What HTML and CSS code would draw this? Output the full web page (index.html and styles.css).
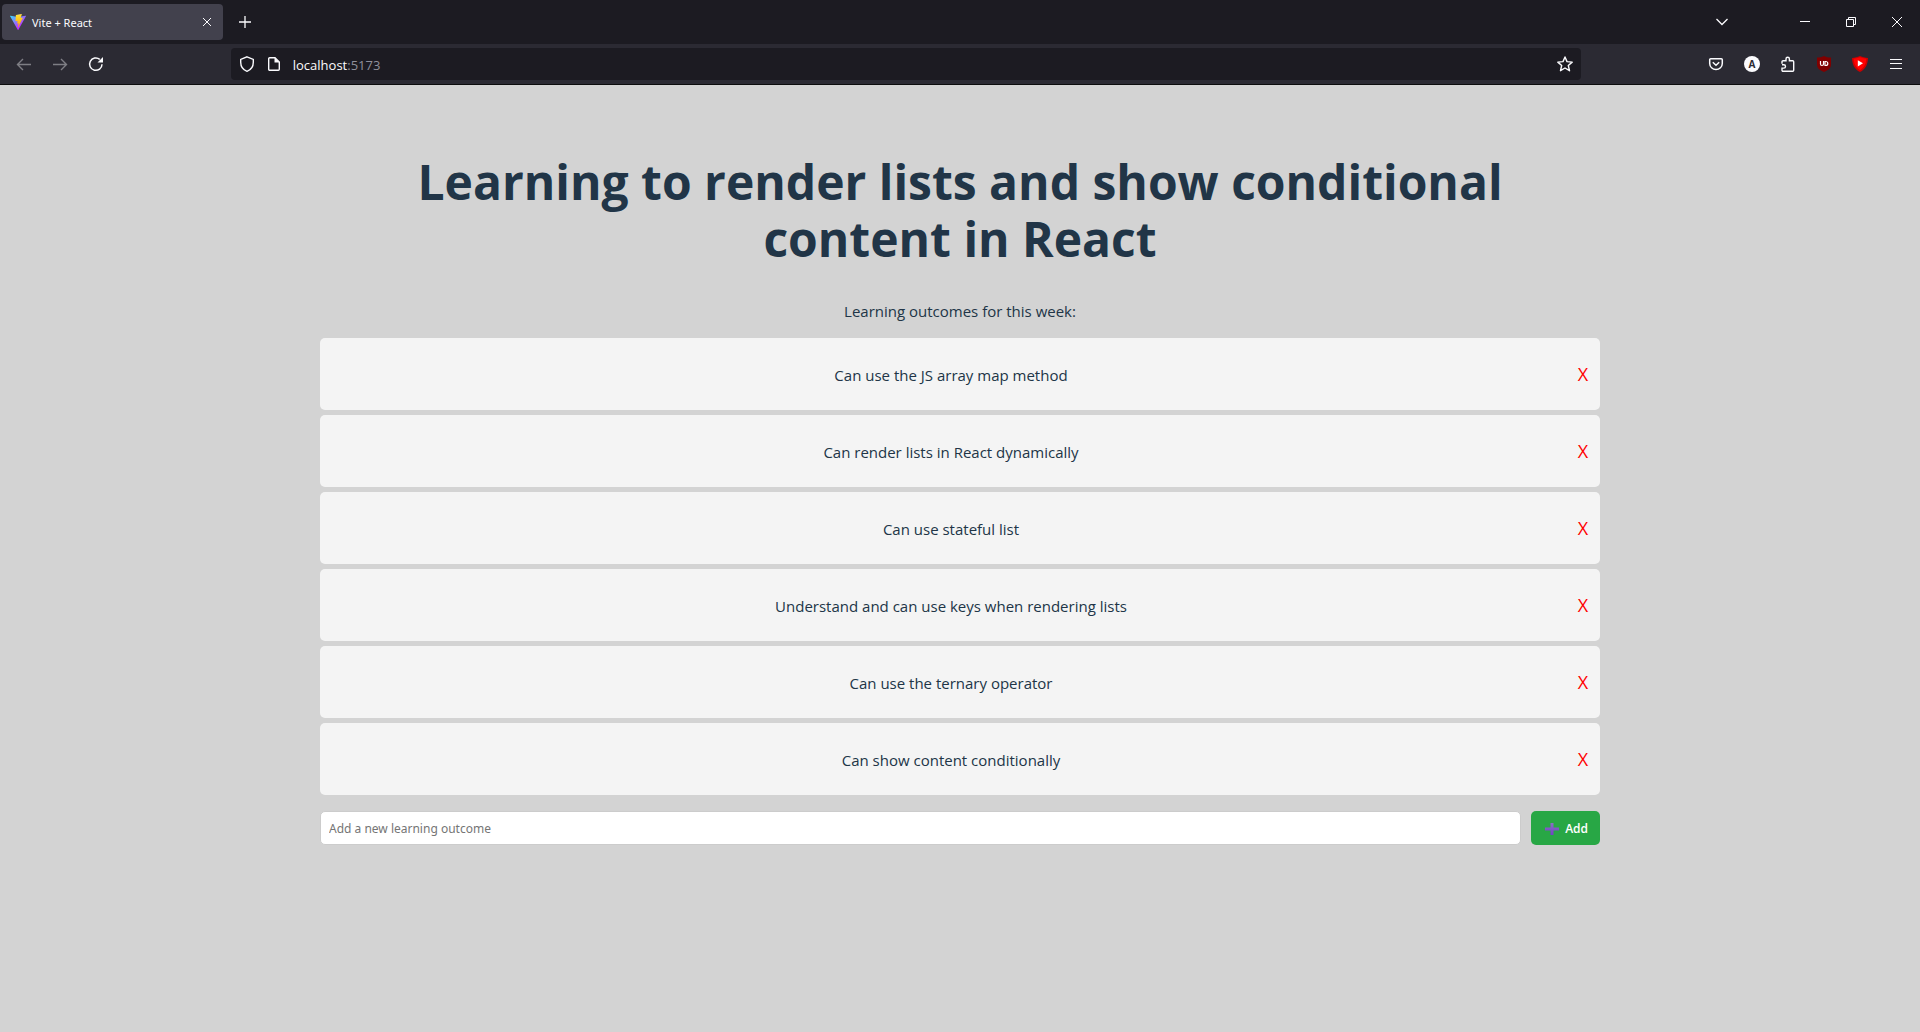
FILE: index.html
```html
<!DOCTYPE html>
<html lang="en">
<head>
<meta charset="utf-8">
<meta name="viewport" content="width=device-width, initial-scale=1">
<title>Vite + React</title>
<link rel="stylesheet" href="styles.css">
</head>
<body>
<header class="browser">
  <div class="tabs">
    <div class="tab">
      <svg width="16" height="16" viewBox="0 0 256 257" aria-hidden="true">
        <defs>
          <linearGradient id="vite-v" x1="-1%" x2="58%" y1="8%" y2="79%"><stop offset="0%" stop-color="#41D1FF"/><stop offset="100%" stop-color="#BD34FE"/></linearGradient>
          <linearGradient id="vite-bolt" x1="43%" x2="50%" y1="2%" y2="89%"><stop offset="0%" stop-color="#FFEA83"/><stop offset="8%" stop-color="#FFDD35"/><stop offset="100%" stop-color="#FFA800"/></linearGradient>
        </defs>
        <path fill="url(#vite-v)" d="M255.153 37.938 134.897 252.976c-2.483 4.44-8.862 4.466-11.382.048L.875 37.958c-2.746-4.814 1.371-10.646 6.827-9.67l120.385 21.517a6.537 6.537 0 0 0 2.322-.004l117.867-21.483c5.438-.991 9.574 4.796 6.877 9.62Z"/>
        <path fill="url(#vite-bolt)" d="M185.432.063 96.44 17.501a3.268 3.268 0 0 0-2.634 3.014l-5.474 92.456a3.268 3.268 0 0 0 3.997 3.378l24.777-5.718c2.318-.535 4.413 1.507 3.936 3.838l-7.361 36.047c-.495 2.426 1.782 4.5 4.151 3.78l15.304-4.649c2.372-.72 4.652 1.36 4.15 3.788l-11.698 56.621c-.732 3.542 3.979 5.473 5.943 2.437l1.313-2.028 72.516-144.72c1.215-2.423-.88-5.186-3.54-4.672l-25.505 4.922c-2.396.462-4.435-1.77-3.759-4.114l16.646-57.705c.677-2.35-1.37-4.583-3.769-4.113Z"/>
      </svg>
      <span class="tab-title">Vite + React</span>
      <button class="tab-close" aria-label="Close tab"><svg width="8" height="8" viewBox="0 0 8 8"><path d="M0 0l8 8M8 0 0 8"/></svg></button>
    </div>
    <button class="tool" aria-label="New tab"><svg width="12" height="12" viewBox="0 0 12 12"><path d="M6 0v12M0 6h12" stroke-width="1.3"/></svg></button>
    <button class="tool tab-list" aria-label="List all tabs"><svg width="12" height="8" viewBox="0 0 12 8"><path d="M.5 1 6 6.500 11.500 1" stroke-width="1.3"/></svg></button>
    <div class="window">
      <button class="control" aria-label="Minimize"><svg width="10" height="10" viewBox="0 0 10 10"><path d="M0 4.500h10"/></svg></button>
      <button class="control" aria-label="Restore"><svg width="10" height="10" viewBox="0 0 10 10"><path d="M.5 2.500h7v7h-7zM2.500 2.500v-2h7v7h-2"/></svg></button>
      <button class="control" aria-label="Close window"><svg width="10" height="10" viewBox="0 0 10 10"><path d="M0 0l10 10M10 0 0 10"/></svg></button>
    </div>
  </div>
  <nav class="toolbar">
    <button class="tool dim" aria-label="Back"><svg width="16" height="16" viewBox="0 0 16 16"><path d="M15 8.500H1.500M7 3 1.500 8.500 7 14" stroke-width="1.4"/></svg></button>
    <button class="tool dim" aria-label="Forward"><svg width="16" height="16" viewBox="0 0 16 16"><path d="M1 8.500h13.500M9 3l5.500 5.500L9 14" stroke-width="1.4"/></svg></button>
    <button class="tool" aria-label="Reload"><svg width="16" height="16" viewBox="0 0 16 16"><path d="M14 8.200A6.200 6.200 0 1 1 11.800 3.400" stroke-width="1.500"/><path d="M15 1v5.500H9.500z" class="solid"/></svg></button>
    <div class="spring"></div>
    <div class="address">
      <svg width="16" height="16" viewBox="0 0 16 16" aria-hidden="true"><path d="M8 .8 14.300 3.400v2.800C14.300 10.600 12 13.800 8 15.300 4 13.800 1.700 10.600 1.700 6.200V3.400z" stroke-width="1.4"/></svg>
      <svg width="16" height="16" viewBox="0 0 16 16" aria-hidden="true"><path d="M3.700 1.700H9l4.300 4.300v7.300a1 1 0 0 1-1 1H3.700a1 1 0 0 1-1-1V2.700a1 1 0 0 1 1-1z" stroke-width="1.4"/><path d="M8.500 1.500v5h5z" class="solid"/></svg>
      <span class="url">localhost<span class="port">:5173</span></span>
      <button class="star" aria-label="Bookmark this page"><svg width="16" height="16" viewBox="0 0 16 16"><path d="m8 1 2 4.600 5.200.5-3.900 3.400 1.200 5.200L8 12l-4.500 2.700 1.200-5.200L.8 6.100 6 5.600z" stroke-width="1.4" stroke-linejoin="round"/></svg></button>
    </div>
    <div class="spring"></div>
    <button class="tool" aria-label="Pocket"><svg width="16" height="16" viewBox="0 0 16 16"><path d="M2.700 2.700h10.600a1 1 0 0 1 1 1V7.500a6.300 6 0 0 1-12.600 0V3.700a1 1 0 0 1 1-1zM4.800 6.300 8 9.300l3.200-3" stroke-width="1.500"/></svg></button>
    <button class="tool" aria-label="Account"><span class="avatar">A</span></button>
    <button class="tool" aria-label="Extensions"><svg width="16" height="16" viewBox="0 0 16 16"><path d="M2 7.700V5.700a1 1 0 0 1 1-1h3V2.900a1.700 1.700 0 0 1 3.400 0v1.800h3.300a1 1 0 0 1 1 1v8.600a1 1 0 0 1-1 1H3a1 1 0 0 1-1-1v-2.200h1.800a1.700 1.700 0 0 0 0-3.400H2" stroke-width="1.4"/></svg></button>
    <button class="tool" aria-label="uBlock Origin"><svg width="16" height="16" viewBox="0 0 16 16"><path fill="#800000" d="M8 0c2.600 1.400 4 1.500 7 1.500v7c0 3.500-2.500 5.800-7 7.500-4.500-1.700-7-4-7-7.500v-7c3 0 4.400-.1 7-1.500z"/><path d="M4.500 5v3a1.500 1.500 0 0 0 3 0V5M9 5.500v4h.8a2 2 0 0 0 0-4z" stroke="#fff" stroke-width="1.200"/></svg></button>
    <button class="tool" aria-label="Ad skipper"><svg width="16" height="16" viewBox="0 0 16 16"><path fill="#c00" d="M8 0c2.800 1.200 5 1.800 8 1.900C15.800 8.500 13.500 13 8 16 2.500 13 .2 8.500 0 1.900 3 1.800 5.200 1.200 8 0z"/><path fill="#f00" d="M8 1.200c2.300.9 4.300 1.400 6.400 1.600-.3 5-2.200 8.800-6.400 11.400C3.800 11.600 1.900 7.800 1.600 2.800 3.700 2.600 5.700 2.100 8 1.200z"/><path fill="#fff" d="M5.800 4.200 11 7.300l-5.200 3.100z"/></svg></button>
    <button class="tool" aria-label="Menu"><svg width="12" height="10" viewBox="0 0 12 10"><path d="M0 .5h12M0 4.500h12M0 9.500h12"/></svg></button>
  </nav>
</header>
<main class="page">
  <h1>Learning to render lists and show conditional content in React</h1>
  <p class="intro">Learning outcomes for this week:</p>
  <ul class="outcomes">
    <li><p>Can use the JS array map method</p><button class="remove">X</button></li>
    <li><p>Can render lists in React dynamically</p><button class="remove">X</button></li>
    <li><p>Can use stateful list</p><button class="remove">X</button></li>
    <li><p>Understand and can use keys when rendering lists</p><button class="remove">X</button></li>
    <li><p>Can use the ternary operator</p><button class="remove">X</button></li>
    <li><p>Can show content conditionally</p><button class="remove">X</button></li>
  </ul>
  <form class="new-outcome">
    <input type="text" aria-label="New learning outcome" placeholder="Add a new learning outcome">
    <button type="button" class="add"><svg width="14" height="14" viewBox="0 0 14 14" aria-hidden="true"><defs><linearGradient id="plus" x2="0" y2="1"><stop stop-color="#8a6fc4"/><stop offset="1" stop-color="#7140c8"/></linearGradient></defs><path fill="url(#plus)" d="M5.500 1h3v4.500H14v3H8.500V13h-3V8.500H0v-3h5.500z"/></svg>Add</button>
  </form>
</main>
</body>
</html>
```
FILE: styles.css
```css
* { box-sizing: border-box; }

body {
  margin: 0;
  min-height: 100vh;
  background: #d3d3d3;
  color: #213547;
  font: 15px/24px "Open Sans", "Noto Sans", sans-serif;
}

button {
  border: 0;
  padding: 0;
  background: none;
  color: inherit;
  font: inherit;
  cursor: pointer;
}

/* Browser window */
.browser {
  border-bottom: 1px solid #0c0c0d;
  background: #2b2a33;
  color: #fbfbfe;
}

.browser button,
.tab,
.address {
  display: flex;
  align-items: center;
}

.browser button { justify-content: center; }

.browser svg {
  flex: none;
  fill: none;
  stroke: currentColor;
}

.browser svg [fill] { stroke: none; }
.browser .solid { fill: currentColor; stroke: none; }

.tabs {
  display: flex;
  align-items: center;
  height: 44px;
  padding-left: 2px;
  background: #1c1b22;
}

.tab {
  gap: 6px;
  width: 221px;
  height: 36px;
  padding: 0 8px;
  border-radius: 4px;
  background: #42414d;
  font: 11px/16px "Noto Sans", sans-serif;
}

.tab-title { flex: 1; padding-top: 2px; }
.tab-close { width: 16px; height: 16px; }

.tool {
  width: 36px;
  height: 32px;
}

.tabs > .tool { margin-left: 4px; }
.tabs > .tab-list { margin: 0 42px 0 auto; }
.window { display: flex; }
.control { width: 46px; height: 44px; }

.toolbar {
  display: flex;
  align-items: center;
  height: 40px;
  padding: 0 6px;
}

.dim { opacity: 0.4; }
.spring { flex: 7; }

.address {
  flex: 80;
  gap: 11px;
  min-width: 0;
  height: 32px;
  padding: 0 8px;
  border-radius: 4px;
  background: #1c1b22;
  font-size: 13px;
}

.url { flex: 1; padding-top: 2px; }
.port { color: #8f8f9a; }
.star { width: 16px; height: 32px; }

.avatar {
  width: 16px;
  border-radius: 50%;
  background: #fbfbfe;
  color: #2b2a33;
  font-size: 10px;
  font-weight: 700;
  line-height: 16px;
}

/* Page */
.page {
  max-width: 1280px;
  margin: 0 auto;
  padding-top: 68px;
  text-align: center;
}

h1 {
  margin: 0 0 32px;
  font-size: 48px;
  font-weight: 700;
  line-height: 57px;
}

.intro { margin: 0 0 15px; }

.outcomes {
  display: grid;
  gap: 5px;
  margin: 0 0 16px;
  padding: 0;
  list-style: none;
}

.outcomes li {
  display: flex;
  align-items: center;
  padding: 8px 6px 8px 10px;
  border-radius: 5px;
  background: #f4f4f4;
}

.outcomes p {
  flex: 1;
  margin: 17px 0 15px;
}

.remove {
  width: 22px;
  color: #f00;
  font-size: 18px;
}

.new-outcome {
  display: flex;
  gap: 10px;
}

.new-outcome input {
  flex: 1;
  min-width: 0;
  padding: 2px 8px 0;
  border: 1px solid #ccc;
  border-radius: 5px;
  background: #fff;
  font: 12px/20px "Noto Sans", sans-serif;
}

.new-outcome input::placeholder { color: #757575; }

.add {
  display: flex;
  align-items: center;
  gap: 6px;
  height: 34px;
  padding: 2px 12px 0 14px;
  border-radius: 5px;
  background: #28a745;
  color: #fff;
  font-size: 12px;
  font-weight: 600;
}
```
